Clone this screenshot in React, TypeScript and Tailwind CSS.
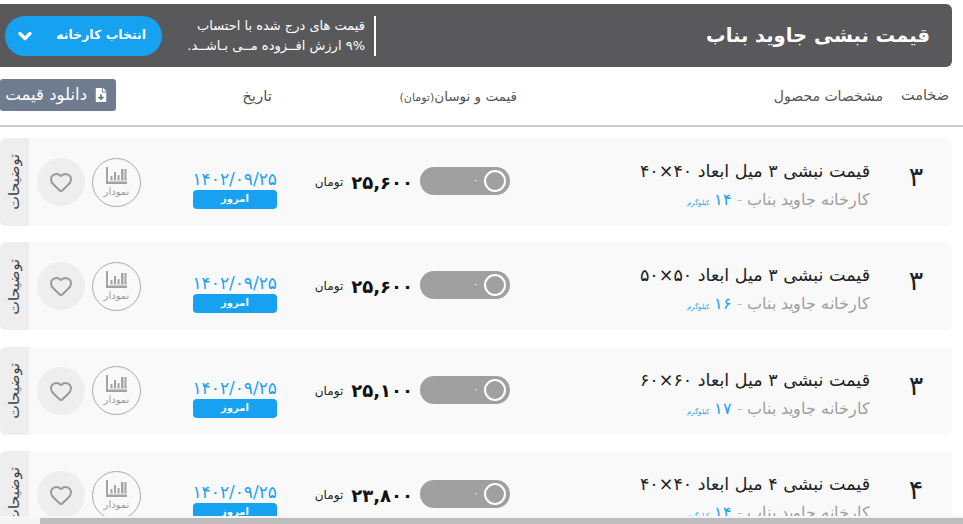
import { ChevronDown, Heart } from 'lucide-react'
import { FaFileDownload } from 'react-icons/fa'

const rows = [
  { mm: '۳', size: '۴۰×۴۰', kg: '۱۴', price: '۲۵,۶۰۰' },
  { mm: '۳', size: '۵۰×۵۰', kg: '۱۶', price: '۲۵,۶۰۰' },
  { mm: '۳', size: '۶۰×۶۰', kg: '۱۷', price: '۲۵,۱۰۰' },
  { mm: '۴', size: '۴۰×۴۰', kg: '۱۴', price: '۲۳,۸۰۰' },
]

function ChartIcon() {
  return (
    <svg width="21" height="17" viewBox="0 0 21 17" className="text-[#a3a3a3]" fill="currentColor">
      <rect x="0" y="0" width="2" height="17" />
      <rect x="0" y="14.5" width="21" height="2.5" />
      <rect x="4.5" y="9" width="2" height="4.5" />
      <rect x="8" y="5" width="2" height="8.5" />
      <rect x="11.5" y="8" width="2" height="5.5" />
      <rect x="15" y="2" width="2.5" height="11.5" />
      <rect x="18.5" y="2" width="2" height="11.5" />
    </svg>
  )
}

function Row({ mm, size, kg, price }: { mm: string; size: string; kg: string; price: string }) {
  return (
    <div className="flex h-[88px] w-[952px] items-center rounded-md bg-[#f9f9f9] overflow-hidden mb-[16.4px]">
      <div className="w-[82px] pl-[10px] pb-[10px] text-center text-[27px] leading-[32px] text-[#222]">{mm}</div>
      <div className="w-[360px] pt-[9px]">
        <div className="text-[17.5px] leading-[24px] text-[#222] whitespace-nowrap">
          قیمت نبشی {mm} میل ابعاد {size}
        </div>
        <div className="mt-[6px] text-[15.5px] leading-[22px] font-light text-[#a0a0a0] whitespace-nowrap">
          کارخانه جاوید بناب -{' '}
          <span className="text-[#1da1f2]">{kg}</span>{' '}
          <span className="text-[7px] text-[#1da1f2]">کیلوگرم</span>
        </div>
      </div>
      <div className="relative mb-[2px] h-[28px] w-[90px] shrink-0 rounded-full bg-[#a0a0a0]">
        <span className="absolute right-[4px] top-[3px] h-[22px] w-[22px] rounded-full border-2 border-white" />
        <span className="absolute left-[53px] top-[5px] text-[10px] text-white">۰</span>
      </div>
      <div className="flex w-[130px] shrink-0 items-center pr-[7px]">
        <span className="text-[18px] font-bold text-[#111] whitespace-nowrap">{price}</span>
        <span className="mr-[8px] text-[12px] text-[#222]">تومان</span>
      </div>
      <div className="w-[84px] shrink-0 mr-[13px] pt-[13px]">
        <div className="text-center text-[17px] leading-[22px] text-[#1da1f2] whitespace-nowrap">۱۴۰۲/۰۹/۲۵</div>
        <div className="h-[19px] rounded-sm bg-[#16a2f0] text-center text-[10px] leading-[18px] font-bold text-white">امروز</div>
      </div>
      <div className="mr-[52px] flex h-[49px] w-[49px] shrink-0 flex-col items-center justify-center rounded-full border border-[#aaa]">
        <ChartIcon />
        <span className="mt-[2px] text-[10px] leading-[12px] text-[#999]">نمودار</span>
      </div>
      <div className="mr-[7px] flex h-[48px] w-[48px] shrink-0 items-center justify-center rounded-full bg-[#eeeeee]">
        <Heart size={24} strokeWidth={2} className="text-[#999]" />
      </div>
      <div className="mr-[8px] flex h-full w-[29px] shrink-0 items-center justify-center bg-[#eeeeee]">
        <span className="-rotate-90 text-[14.5px] text-[#444] whitespace-nowrap">توضیحات</span>
      </div>
    </div>
  )
}

export default function App() {
  return (
    <div dir="rtl" className="relative h-[524px] w-[963px] overflow-hidden bg-white font-['DejaVu_Sans',sans-serif]">
      <div className="absolute inset-x-0 top-0" dir="ltr">
        <div dir="rtl" className="w-[952px] pt-[4px]">
          <div className="flex h-[63px] items-center rounded-r-md bg-[#59595b] pr-[22px] pl-[5px] text-white">
            <h1 className="text-[19.5px] font-bold whitespace-nowrap">قیمت نبشی جاوید بناب</h1>
            <div className="mr-auto h-[40px] w-[2px] bg-white" />
            <div className="mr-[9px] w-[178px] text-[13px] leading-[20px] whitespace-nowrap">
              <div>قیمت های درج شده با احتساب</div>
              <div>۹% ارزش افــزوده مــی بـاشــد.</div>
            </div>
            <button className="mr-[25px] flex h-[40px] w-[157px] items-center justify-between rounded-full bg-[#16a2f0] pr-[16px] pl-[10px] text-[12.5px] font-bold whitespace-nowrap">
              انتخاب کارخانه
              <ChevronDown size={20} strokeWidth={4} />
            </button>
          </div>
          <div className="-mr-[11px] flex h-[60px] w-[963px] items-center border-b-2 border-[#cccccc] text-[#555]">
            <span className="mr-[14px] w-[66px] text-[14.5px] whitespace-nowrap">ضخامت</span>
            <span className="w-[366px] text-[14px] whitespace-nowrap">مشخصات محصول</span>
            <span className="w-[245px] text-[13.5px] whitespace-nowrap">
              قیمت و نوسان<span className="text-[11px]">(تومان)</span>
            </span>
            <span className="w-[156px] text-[15px]">تاریخ</span>
            <button className="mb-[2px] flex h-[32px] w-[116px] shrink-0 items-center gap-[7px] rounded-[3px] bg-[#6f7b8f] pr-[8px] text-[16.5px] text-white whitespace-nowrap">
              <FaFileDownload size={14} />
              دانلود قیمت
            </button>
          </div>
          <div className="mt-[11px]">
            {rows.map((r, i) => (
              <Row key={i} {...r} />
            ))}
          </div>
        </div>
      </div>
      {/* horizontal scrollbar */}
      <div className="absolute inset-x-0 bottom-0 h-[8px] bg-[#f5f5f5]" dir="ltr">
        <div className="ml-[40px] mt-[2px] h-[6px] bg-[#bdbdbd]" />
      </div>
    </div>
  )
}
